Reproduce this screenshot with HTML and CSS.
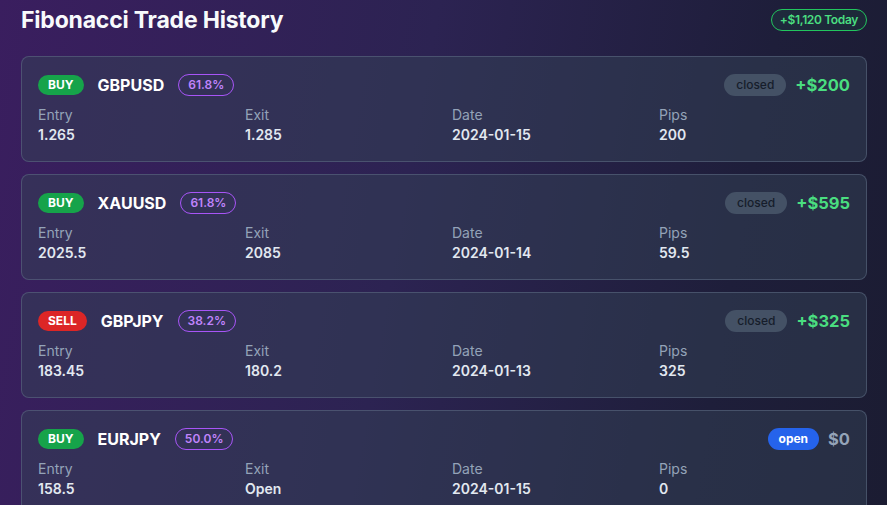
FILE: index.html
```html
<!DOCTYPE html>
<html lang="en">
<head>
<meta charset="utf-8">
<title>Fibonacci Trade History</title>
<link rel="stylesheet" href="styles.css">
</head>
<body>
<div class="page">
  <header class="header">
    <h1 class="title">Fibonacci Trade History</h1>
    <span class="today">+$1,120 Today</span>
  </header>
  <div class="list">
    <div class="card">
      <div class="top">
        <div class="left">
          <span class="side buy">BUY</span>
          <span class="pair">GBPUSD</span>
          <span class="fib">61.8%</span>
        </div>
        <div class="right">
          <span class="status closed">closed</span>
          <span class="pnl pos">+$200</span>
        </div>
      </div>
      <div class="grid">
        <div class="cell"><div class="label">Entry</div><div class="value">1.265</div></div>
        <div class="cell"><div class="label">Exit</div><div class="value">1.285</div></div>
        <div class="cell"><div class="label">Date</div><div class="value">2024-01-15</div></div>
        <div class="cell"><div class="label">Pips</div><div class="value">200</div></div>
      </div>
    </div>
    <div class="card">
      <div class="top">
        <div class="left">
          <span class="side buy">BUY</span>
          <span class="pair">XAUUSD</span>
          <span class="fib">61.8%</span>
        </div>
        <div class="right">
          <span class="status closed">closed</span>
          <span class="pnl pos">+$595</span>
        </div>
      </div>
      <div class="grid">
        <div class="cell"><div class="label">Entry</div><div class="value">2025.5</div></div>
        <div class="cell"><div class="label">Exit</div><div class="value">2085</div></div>
        <div class="cell"><div class="label">Date</div><div class="value">2024-01-14</div></div>
        <div class="cell"><div class="label">Pips</div><div class="value">59.5</div></div>
      </div>
    </div>
    <div class="card">
      <div class="top">
        <div class="left">
          <span class="side sell">SELL</span>
          <span class="pair">GBPJPY</span>
          <span class="fib">38.2%</span>
        </div>
        <div class="right">
          <span class="status closed">closed</span>
          <span class="pnl pos">+$325</span>
        </div>
      </div>
      <div class="grid">
        <div class="cell"><div class="label">Entry</div><div class="value">183.45</div></div>
        <div class="cell"><div class="label">Exit</div><div class="value">180.2</div></div>
        <div class="cell"><div class="label">Date</div><div class="value">2024-01-13</div></div>
        <div class="cell"><div class="label">Pips</div><div class="value">325</div></div>
      </div>
    </div>
    <div class="card">
      <div class="top">
        <div class="left">
          <span class="side buy">BUY</span>
          <span class="pair">EURJPY</span>
          <span class="fib">50.0%</span>
        </div>
        <div class="right">
          <span class="status open">open</span>
          <span class="pnl zero">$0</span>
        </div>
      </div>
      <div class="grid">
        <div class="cell"><div class="label">Entry</div><div class="value">158.5</div></div>
        <div class="cell"><div class="label">Exit</div><div class="value">Open</div></div>
        <div class="cell"><div class="label">Date</div><div class="value">2024-01-15</div></div>
        <div class="cell"><div class="label">Pips</div><div class="value">0</div></div>
      </div>
    </div>
  </div>
</div>
</body>
</html>
```

FILE: styles.css
```css
* { box-sizing: border-box; }
html, body { margin: 0; padding: 0; height: 100%; overflow: hidden; }
body {
  font-family: Inter, "Liberation Sans", sans-serif;
  background: linear-gradient(100deg, #3a1e5f 0%, #2c2352 45%, #1e1e3a 80%, #1b1c32 100%);
  color: #fff;
}
.page { padding: 4px 20px 0 21px; }
.header {
  display: flex;
  align-items: center;
  justify-content: space-between;
  height: 32px;
  margin-bottom: 20px;
}
.title {
  margin: 0;
  font-size: 23px;
  line-height: 32px;
  font-weight: 700;
  color: #f8fafc;
  letter-spacing: -0.2px;
}
.today {
  font-size: 12px;
  font-weight: 600;
  line-height: 16px;
  letter-spacing: -0.35px;
  color: #4ade80;
  border: 1px solid #22c55e;
  border-radius: 999px;
  padding: 2px 8px;
  background: rgba(34, 197, 94, 0.08);
  margin-top: -1px;
}
.list { display: flex; flex-direction: column; gap: 12px; }
.card {
  background: rgba(51, 65, 85, 0.5);
  border: 1px solid rgba(100, 116, 139, 0.5);
  border-radius: 8px;
  padding: 16px;
}
.top {
  display: flex;
  align-items: center;
  justify-content: space-between;
  height: 24px;
  margin-bottom: 8px;
}
.left { display: flex; align-items: center; gap: 14px; }
.right { display: flex; align-items: center; gap: 9px; }
.side {
  font-size: 12px;
  font-weight: 700;
  line-height: 16px;
  padding: 2px 10px;
  border-radius: 999px;
  color: #fff;
}
.buy { background: #16a34a; }
.sell { background: #dc2626; }
.pair { font-size: 16px; font-weight: 700; color: #fff; line-height: 24px; }
.fib {
  font-size: 12px;
  font-weight: 600;
  line-height: 16px;
  padding: 2px 9px;
  border: 1px solid #a855f7;
  border-radius: 999px;
  color: #c084fc;
}
.status {
  font-size: 12px;
  line-height: 16px;
  padding: 3px 12px;
  border-radius: 999px;
}
.closed { background: #445165; color: #161d2b; font-weight: 500; }
.open { background: #2563eb; color: #fff; font-weight: 700; padding: 3px 11px; }
.pnl { font-size: 16.5px; font-weight: 700; line-height: 24px; }
.pos { color: #4ade80; }
.zero { color: #94a3b8; }
.grid {
  display: grid;
  grid-template-columns: repeat(4, 1fr);
  gap: 16px;
}
.label { font-size: 14px; line-height: 20px; color: #94a3b8; }
.value { font-size: 14px; line-height: 20px; font-weight: 600; color: #e2e8f0; }
```
